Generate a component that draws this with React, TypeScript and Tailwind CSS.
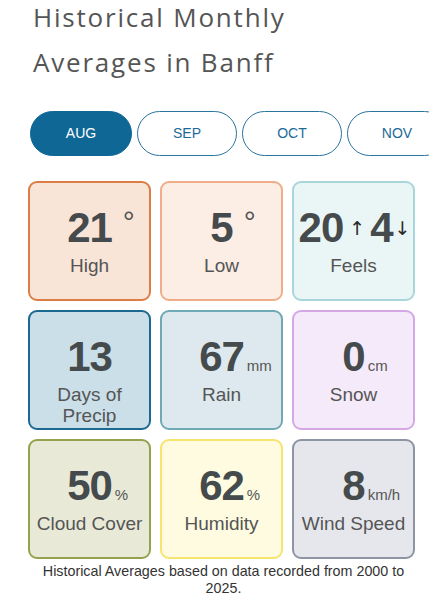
const months = ["AUG", "SEP", "OCT", "NOV"];

type Stat = {
  value: string;
  unit?: string;
  degree?: boolean;
  label: string;
  card: string;
};

const stats: Stat[] = [
  { value: "21", degree: true, label: "High", card: "bg-[#f9e4d8] border-[#dc7d45]" },
  { value: "5", degree: true, label: "Low", card: "bg-[#fcede5] border-[#efae89]" },
  { value: "feels", label: "Feels", card: "bg-[#eaf5f6] border-[#a9d6dc]" },
  { value: "13", label: "Days of Precip", card: "bg-[#cbdfe9] border-[#1d6890]" },
  { value: "67", unit: "mm", label: "Rain", card: "bg-[#dde9ee] border-[#70a9b6]" },
  { value: "0", unit: "cm", label: "Snow", card: "bg-[#f5eaf9] border-[#d5a8e5]" },
  { value: "50", unit: "%", label: "Cloud Cover", card: "bg-[#e8e9d7] border-[#95a24c]" },
  { value: "62", unit: "%", label: "Humidity", card: "bg-[#fefbe1] border-[#f6e46f]" },
  { value: "8", unit: "km/h", label: "Wind Speed", card: "bg-[#e6e7ec] border-[#8d94a4]" },
];

function StatCard({ stat }: { stat: Stat }) {
  return (
    <div
      className={`h-[120px] rounded-[9px] border-2 flex flex-col items-center pt-[23px] ${stat.card}`}
    >
      {stat.value === "feels" ? (
        <div className="flex items-center h-[44px] text-[#454a4c] ml-[2px]">
          <span className="text-[42px] leading-[44px] font-bold tracking-[-1px]">20</span>
          <span className="text-[19px] text-[#2a2a2a] ml-[6px] mr-[5px] font-['DejaVu_Sans',sans-serif]">↑</span>
          <span className="text-[42px] leading-[44px] font-bold tracking-[-1px]">4</span>
          <span className="text-[19px] text-[#2a2a2a] ml-[2px] font-['DejaVu_Sans',sans-serif]">↓</span>
        </div>
      ) : (
        <div className="flex items-baseline h-[44px] text-[#454a4c]">
          <span className="text-[42px] leading-[44px] font-bold tracking-[-1px]">{stat.value}</span>
          {stat.degree && (
            <span className="w-0 whitespace-nowrap text-[30px] leading-[30px] text-[#555] -translate-y-[10px]">
              <span className="ml-[11px]">°</span>
            </span>
          )}
          {stat.unit && (
            <span className="w-0 whitespace-nowrap text-[15px] text-[#555]">
              <span className="ml-[3px]">{stat.unit}</span>
            </span>
          )}
        </div>
      )}
      <p className="mt-[5px] text-[19px] leading-[21px] text-[#555] text-center whitespace-pre-line">
        {stat.label === "Days of Precip" ? "Days of\nPrecip" : stat.label}
      </p>
    </div>
  );
}

export default function App() {
  return (
    <div className="w-[447px] h-[600px] bg-white overflow-hidden font-['Liberation_Sans',Arial,sans-serif]">
      <h1 className="-mt-[5px] pl-[33px] text-[26px] leading-[45px] tracking-[1.8px] text-[#555] font-['Open_Sans',sans-serif]">
        Historical Monthly
        <br />
        Averages in Banff
      </h1>
      <div className="mt-[26px] ml-[30px] w-[399px] overflow-hidden">
        <div className="flex gap-[5px] w-max">
          {months.map((m, i) => (
            <button
              key={m}
              className={
                i === 0
                  ? "w-[102px] h-[45px] shrink-0 rounded-full bg-[#0f6796] border-[1.5px] border-[#0f6796] text-white text-[14px]"
                  : "w-[100px] h-[45px] shrink-0 rounded-full border-[1.5px] border-[#2a739c] text-[#1b6a97] text-[14px]"
              }
            >
              {m}
            </button>
          ))}
        </div>
      </div>
      <div className="mt-[25px] ml-[28px] w-[387px] grid grid-cols-3 gap-x-[9px] gap-y-[9px]">
        {stats.map((s) => (
          <StatCard key={s.label} stat={s} />
        ))}
      </div>
      <p className="mt-[4px] text-center text-[14.3px] leading-[17px] text-[#333] px-[38px]">
        Historical Averages based on data recorded from 2000 to 2025.
      </p>
    </div>
  );
}
